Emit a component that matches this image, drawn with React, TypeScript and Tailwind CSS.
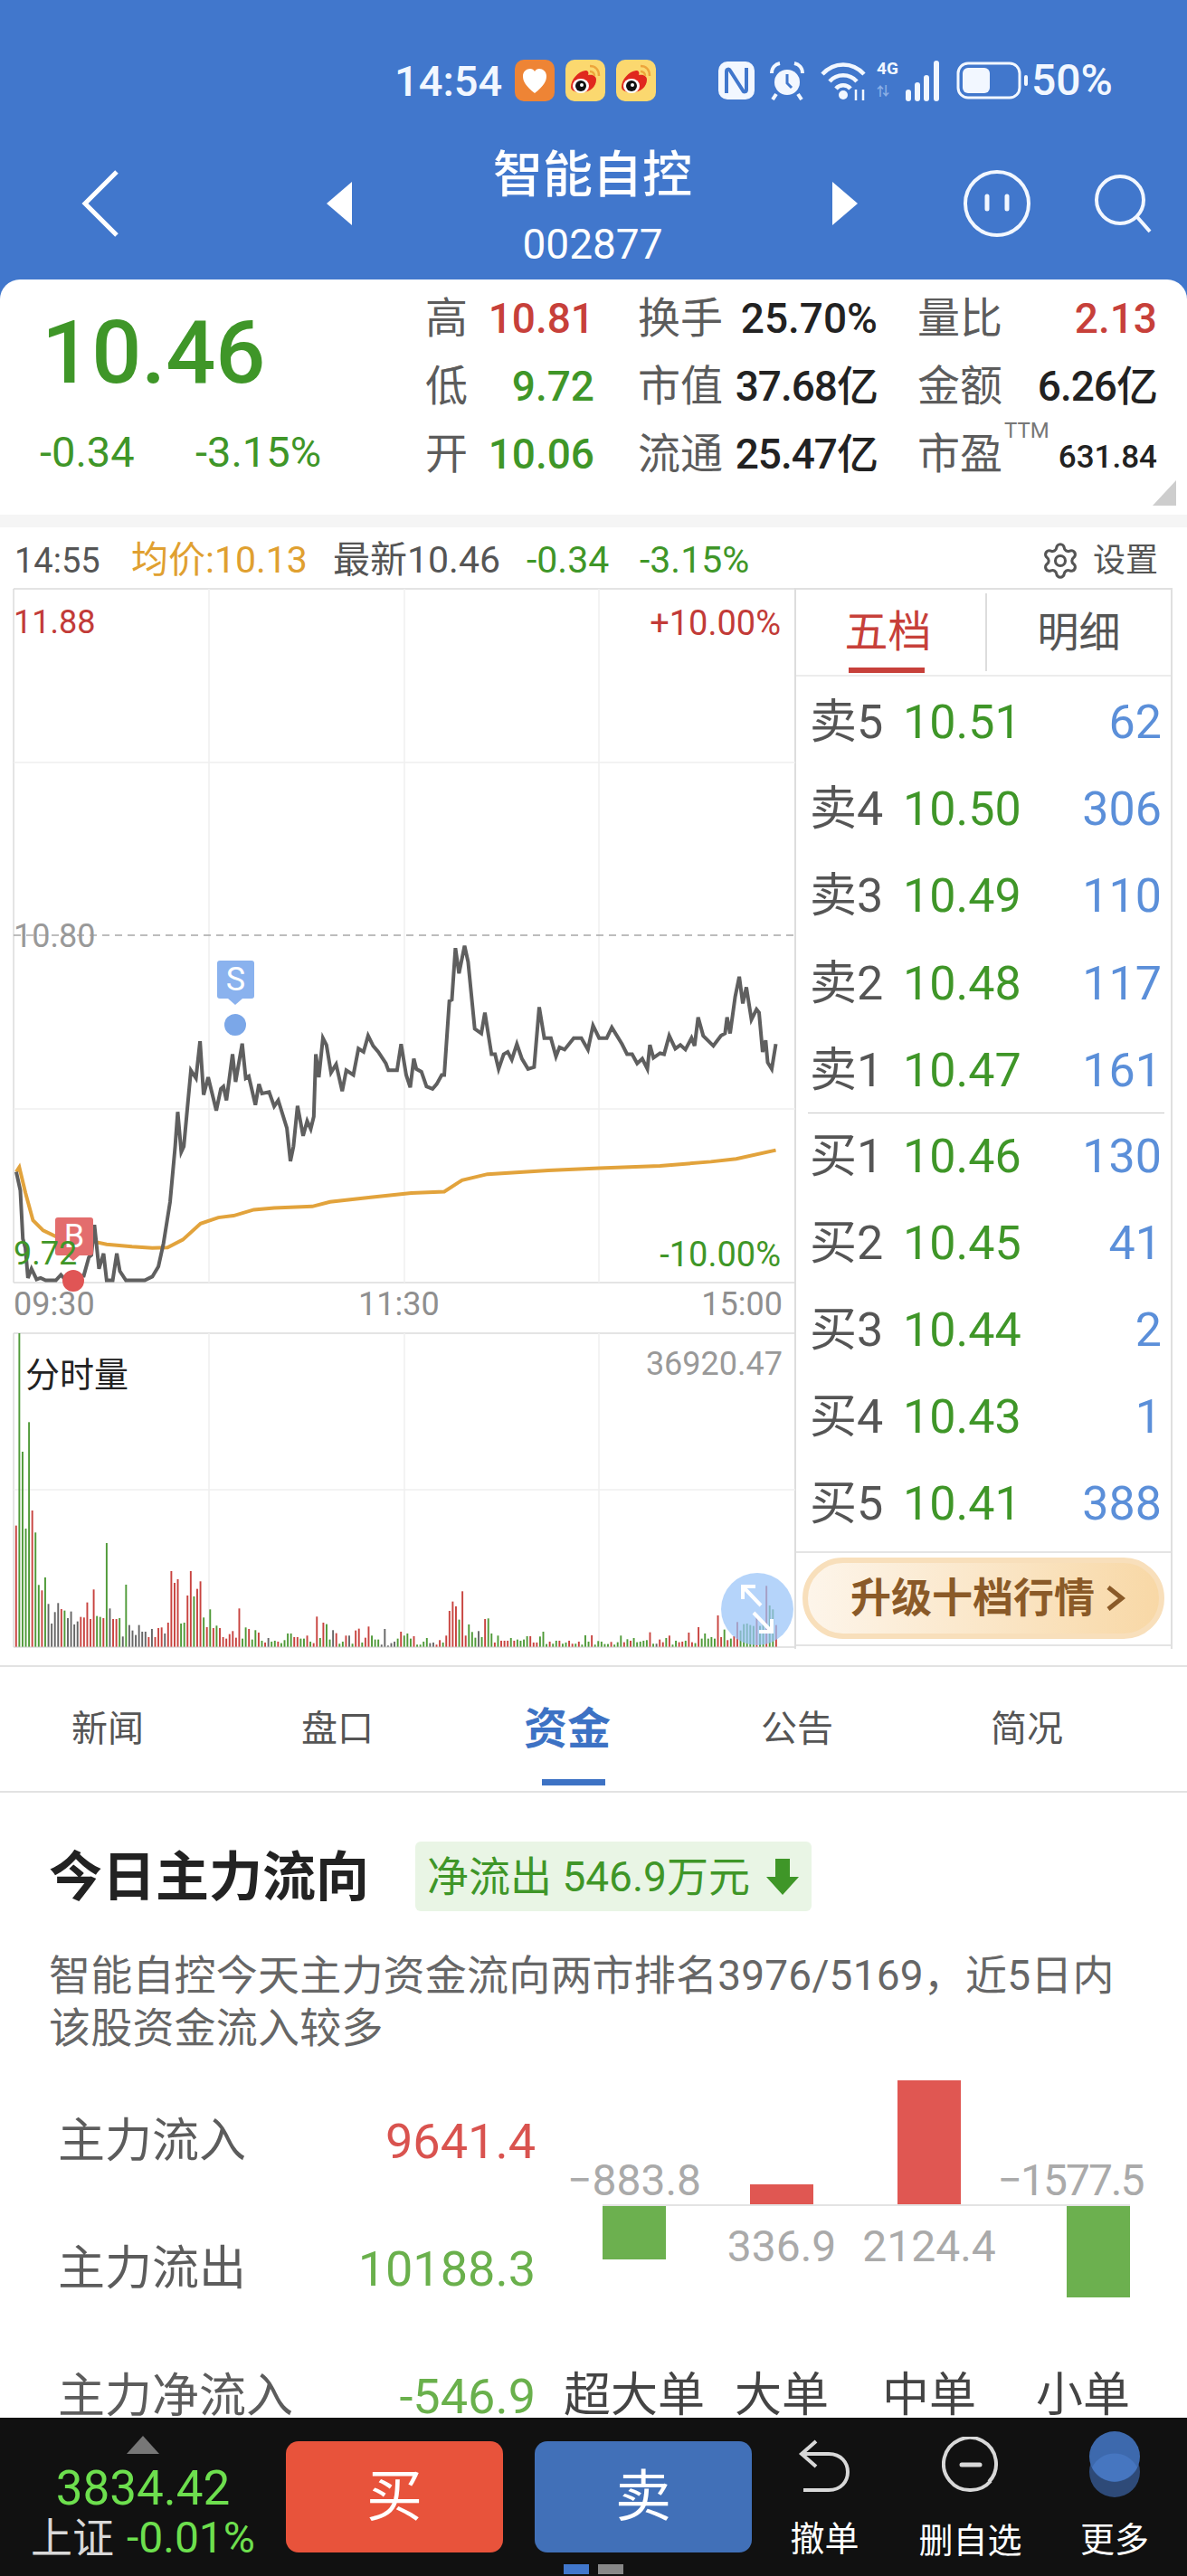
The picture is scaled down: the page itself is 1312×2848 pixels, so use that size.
import React from "react";
import { Settings } from "lucide-react";

const GRAY_LINE =
  "32,1285 40,1325 45,1430 50,1450 55,1515 62,1495 72,1518 80,1515 90,1520 110,1520 120,1508 128,1518 135,1520 150,1510 165,1510 175,1470 180,1465 186,1400 195,1495 204,1462 210,1520 222,1520 230,1462 236,1500 248,1520 285,1520 300,1512 312,1490 322,1440 335,1350 345,1230 350,1155 357,1242 362,1230 376,1065 386,1082 394,1002 401,1118 410,1080 426,1152 435,1105 440,1100 446,1130 458,1030 464,1090 477,1007 484,1082 490,1078 503,1140 510,1095 516,1115 530,1112 540,1143 548,1130 565,1190 572,1262 578,1230 586,1142 597,1207 605,1175 612,1192 618,1165 622,1030 628,1080 636,995 643,1010 652,1070 662,1052 674,1110 682,1065 696,1075 706,1018 716,1025 725,990 735,1012 745,1025 760,1050 765,1065 782,1065 790,1008 800,1075 808,1102 815,1040 820,1062 830,1068 840,1100 852,1105 860,1095 870,1075 875,1075 885,915 890,912 897,800 904,855 915,795 922,830 935,975 948,985 955,940 968,1030 975,1030 982,1062 992,1030 1000,1025 1008,1042 1018,1008 1028,1040 1040,1062 1052,1058 1062,928 1072,995 1085,995 1095,1035 1102,1015 1112,1020 1130,995 1145,995 1158,1020 1168,968 1180,995 1195,995 1205,972 1225,1008 1235,1030 1245,1030 1255,1050 1265,1040 1275,1062 1280,1010 1287,1038 1300,1028 1308,1030 1318,990 1330,1018 1340,1010 1350,1020 1362,995 1368,1012 1375,950 1385,990 1405,1012 1420,990 1428,985 1432,950 1438,985 1448,905 1456,862 1463,920 1470,885 1480,955 1490,933 1495,940 1502,1025 1508,1000 1512,1048 1520,1062 1528,1008";
const GOLD_LINE =
  "32,1285 38,1275 50,1330 65,1390 85,1412 110,1425 150,1432 180,1435 210,1442 260,1447 300,1450 330,1449 360,1432 395,1397 430,1384 460,1380 500,1367 540,1363 615,1360 650,1350 730,1340 810,1331 875,1328 910,1303 960,1290 1080,1282 1180,1277 1300,1272 1400,1263 1450,1257 1528,1238";
const VOL =
  "770r 132g 525g 780g 427g 720r 793g 967g 985r 942g 1030k 1095k 1057k 1027k 1047r 1052g 1077k 1055k 1098k 1088k 1073r 1075r 1025r 1080r 982r 1070g 1073g 1077r 828g 1045k 1080r 1080r 1077g 1138k 966g 1100k 1118k 1133k 1100k 1122k 1122k 1140r 1113k 1140r 1110r 1108r 1128k 1092r 921r 960r 948r 1095g 1092g 1002r 921r 1005g 980r 955r 1075g 1107r 1048g 1110r 1102g 1110r 1140r 1145r 1130r 1120r 1142r 1045r 1145g 1108g 1113r 1148g 1117g 1125r 1152g 1158r 1143k 1155g 1152g 1155r 1160g 1150g 1128g 1128g 1140r 1140r 1145g 1145g 1135r 1155g 1160r 1072r 1143g 1092r 1097g 1148g 1117k 1127r 1162g 1155g 1135r 1135k 1162g 1118r 1112r 1158g 1142r 1105r 1135g 1148g 1148g 1165k 1113k 1168k 1160k 1155k 1145g 1122r 1135g 1128g 1145g 1137r 1165g 1165g 1155g 1143g 1160k 1158k 1165r 1150r 1158g 1135r 1053r 1022r 1038r 1082g 988r 1135r 1098g 1123g 1142g 1120k 1140g 1080r 1078g 1128g 1158r 1135g 1152r 1152r 1152r 1143g 1152r 1148g 1152g 1148g 1137g 1137r 1158r 1158r 1138g 1122g 1163g 1155r 1162g 1152g 1152r 1162g 1158g 1152r 1162r 1162g 1155r 1165g 1134g 1155g 1134r 1165g 1153g 1155g 1163g 1163g 1156r 1165g 1157g 1135g 1157r 1147g 1152r 1143g 1157g 1155g 1152g 1150g 1124r 1162g 1162k 1148r 1157r 1143g 1135r 1165g 1152g 1157r 1155r 1152g 1125r 1157r 1160g 1107r 1145g 1128g 1145g 1140g 1145g 1068r 1140r 1115g 1150r 1145g 1137r 1090r 1118g 1097g 1095g 1100g 1103g 1072r 1103g 1090g 970r 1035g 1048g 1100r"
    .split(" ");
const VOL_COLOR: Record<string, string> = { r: "#c8433f", g: "#4f9a38", k: "#666666" };

const BOOK = [
  ["卖5", "10.51", "62"],
  ["卖4", "10.50", "306"],
  ["卖3", "10.49", "110"],
  ["卖2", "10.48", "117"],
  ["卖1", "10.47", "161"],
];
const BOOK2 = [
  ["买1", "10.46", "130"],
  ["买2", "10.45", "41"],
  ["买3", "10.44", "2"],
  ["买4", "10.43", "1"],
  ["买5", "10.41", "388"],
];

function BookRow({ r }: { r: string[] }) {
  return (
    <div className="flex h-[96.2px] items-center pl-[15px] pr-[10px] text-[52px] leading-none">
      <span className="w-[103px] text-[#555555]">{r[0]}</span>
      <span className="text-[#3f9628]">{r[1]}</span>
      <span className="ml-auto text-[#5b8fd9]">{r[2]}</span>
    </div>
  );
}

function Weibo() {
  return (
    <svg width="44" height="46" viewBox="0 0 44 46">
      <rect width="44" height="46" rx="10" fill="#fbd86f" />
      <path d="M6 30c0-8 8-17 16-18 3 0 4 2 3 5 5-1 9 1 9 5 0 8-7 14-16 14-8 0-12-2-12-6z" fill="#e0281e" />
      <ellipse cx="17" cy="29" rx="9" ry="8" fill="#fff" />
      <circle cx="17" cy="29" r="6" fill="#111" />
      <circle cx="18" cy="28" r="2" fill="#fff" />
      <path d="M27 7c6 0 10 4 10 11M27 13c3 0 5 2 5 5" stroke="#eda53c" strokeWidth="2.5" fill="none" />
    </svg>
  );
}

function StatusBar() {
  return (
    <div className="mt-[60px] flex h-[58px] items-center pl-[436px] text-[47px] font-medium leading-none text-[#f2f7ff]">
      <span className="w-[133px]">14:54</span>
      <svg width="44" height="46" viewBox="0 0 44 46">
        <rect width="44" height="46" rx="10" fill="#ee8435" />
        <path d="M22 37C12 29 9 24 9 18c0-5 4-8 8-8 2 0 4 1 5 3 1-2 3-3 5-3 4 0 8 3 8 8 0 6-3 11-13 19z" fill="#fff" />
      </svg>
      <span className="ml-[12px] flex items-center">
        <Weibo />
      </span>
      <span className="ml-[12px] flex items-center">
        <Weibo />
      </span>
      <svg className="ml-[68px]" width="42" height="44" viewBox="0 0 42 44" fill="none">
        <rect x="1" y="1" width="40" height="42" rx="10" fill="#f2f7ff" />
        <path d="M10 36V12c0-3 3-3 4-1l14 22c1 2 4 2 4-1V8" stroke="#4177cc" strokeWidth="4" />
      </svg>
      <svg className="ml-[15px]" width="40" height="44" viewBox="0 0 40 44" fill="none">
        <circle cx="20" cy="24" r="14" fill="#f2f7ff" />
        <path d="M20 15v10l5 5" stroke="#4177cc" strokeWidth="3" />
        <path d="M3 14c0-6 4-10 9-11M37 14c0-6-4-10-9-11M8 37l-4 6M32 37l4 6" stroke="#f2f7ff" strokeWidth="4" />
      </svg>
      <svg className="ml-[17px]" width="54" height="44" viewBox="0 0 54 44" fill="none">
        <path d="M2 15c13-14 33-14 46 0M10 23c8-9 22-9 30 0M17 31c4-5 12-5 16 0" stroke="#f2f7ff" strokeWidth="4.5" />
        <circle cx="25" cy="38" r="5" fill="#f2f7ff" />
        <path d="M39 32v12M47 32v12" stroke="#f2f7ff" strokeWidth="2.5" />
      </svg>
      <span className="ml-[8px] flex h-[46px] w-[34px] flex-col text-[19px] font-bold leading-[20px]">
        <span>4G</span>
        <span className="mt-[6px] text-[14px] leading-[16px] text-[#8db0e6]">⇅</span>
      </span>
      <svg className="-ml-[4px]" width="44" height="46" viewBox="0 0 44 46" fill="#f2f7ff">
        <rect x="2" y="33" width="6" height="13" rx="3" />
        <rect x="12" y="25" width="6" height="21" rx="3" />
        <rect x="22" y="17" width="6" height="29" rx="3" />
        <rect x="33" y="1" width="6" height="45" rx="3" />
      </svg>
      <svg className="ml-[14px]" width="80" height="42" viewBox="0 0 80 42" fill="none">
        <rect x="2" y="2" width="68" height="38" rx="11" stroke="#f2f7ff" strokeWidth="3" />
        <rect x="7" y="7" width="30" height="28" rx="6" fill="#f2f7ff" />
        <rect x="75" y="15" width="4" height="12" rx="2" fill="#f2f7ff" />
      </svg>
      <span className="ml-[3px] text-[48px]">50%</span>
    </div>
  );
}

function NavBar() {
  return (
    <div className="mt-[32px] flex h-[150px] items-center pl-[90px] text-white">
      <svg width="42" height="74" viewBox="0 0 42 74" fill="none">
        <path d="M39 2 4 37l35 35" stroke="#fff" strokeWidth="5" />
      </svg>
      <svg className="ml-[229px]" width="28" height="48" viewBox="0 0 28 48">
        <path d="M28 0v48L0 24z" fill="#fff" />
      </svg>
      <div className="ml-[156px] flex h-[150px] w-[220px] flex-col items-center">
        <div className="mt-[2px] h-[82px] text-[55px] font-medium leading-[82px]">智能自控</div>
        <div className="h-[72px] text-[46px] leading-[72px]">002877</div>
      </div>
      <svg className="ml-[155px]" width="28" height="48" viewBox="0 0 28 48">
        <path d="M0 0v48l28-24z" fill="#fff" />
      </svg>
      <svg className="ml-[116px]" width="76" height="76" viewBox="0 0 76 76" fill="none">
        <circle cx="38" cy="38" r="35" stroke="#f2f7ff" strokeWidth="4" />
        <path d="M27 30v14M49 30v14" stroke="#f2f7ff" strokeWidth="5" strokeLinecap="round" />
      </svg>
      <svg className="ml-[69px]" width="66" height="66" viewBox="0 0 66 66" fill="none">
        <circle cx="29" cy="29" r="26" stroke="#f2f7ff" strokeWidth="4" />
        <path d="m48 48 14 16" stroke="#f2f7ff" strokeWidth="4" />
      </svg>
    </div>
  );
}

function Stat({ k, v, c, kw = "w-[46px]", vw = "w-[141px]" }: { k: string; v: string; c: string; kw?: string; vw?: string }) {
  return (
    <>
      <span className={`${kw} whitespace-nowrap text-[47px] leading-none text-[#5c5c5c]`}>{k}</span>
      <span className={`${vw} text-right text-[46px] font-medium leading-none ${c}`}>{v}</span>
    </>
  );
}

function Quote() {
  return (
    <div className="flex h-[260px] rounded-t-[22px] bg-white">
      <div className="w-[470px] pl-[44px]">
        <div className="mt-[31px] h-[100px] pl-[2px] text-[97px] font-medium leading-[100px] text-[#3f9628]">10.46</div>
        <div className="mt-[29px] flex h-[60px] items-center text-[47px] leading-none text-[#3f9628]">
          <span className="w-[172px]">-0.34</span>
          <span>-3.15%</span>
        </div>
      </div>
      <div className="flex flex-col pt-[5px]">
        <div className="flex h-[75px] items-center">
          <Stat k="高" v="10.81" c="text-[#c7403a]" />
          <span className="w-[48px]" />
          <Stat k="换手" v="25.70%" c="text-[#222222]" kw="w-[96px]" vw="w-[169px]" />
          <span className="w-[44px]" />
          <Stat k="量比" v="2.13" c="text-[#c7403a]" kw="w-[96px]" vw="w-[169px]" />
        </div>
        <div className="flex h-[75px] items-center">
          <Stat k="低" v="9.72" c="text-[#3f9628]" />
          <span className="w-[48px]" />
          <Stat k="市值" v="37.68亿" c="text-[#222222] tracking-[-1px]" kw="w-[96px]" vw="w-[169px]" />
          <span className="w-[44px]" />
          <Stat k="金额" v="6.26亿" c="text-[#222222] tracking-[-1px]" kw="w-[96px]" vw="w-[169px]" />
        </div>
        <div className="flex h-[75px] items-center">
          <Stat k="开" v="10.06" c="text-[#3f9628]" />
          <span className="w-[48px]" />
          <Stat k="流通" v="25.47亿" c="text-[#222222] tracking-[-1px]" kw="w-[96px]" vw="w-[169px]" />
          <span className="w-[44px]" />
          <span className="w-[96px] text-[47px] leading-none text-[#5c5c5c]">市盈</span>
          <span className="flex w-[169px] items-start">
            <span className="-mt-[16px] text-[24px] leading-none text-[#777777]">TTM</span>
            <span className="ml-auto mt-[8px] text-[35px] font-medium leading-none text-[#222222]">631.84</span>
          </span>
        </div>
        <div className="flex justify-end">
          <svg className="-mr-[21px] mt-[-8px]" width="26" height="28" viewBox="0 0 26 28">
            <path d="M26 0v28H0z" fill="#cdcdcd" />
          </svg>
        </div>
      </div>
    </div>
  );
}

function ChartHeader() {
  return (
    <div className="flex h-[67px] items-center pl-[16px] pr-[32px] pt-[6px] text-[41px] leading-none">
      <span className="w-[129px] text-[38px] text-[#555555]">14:55</span>
      <span className="w-[223px] text-[#e0a030]">均价:10.13</span>
      <span className="w-[214px] text-[#555555]">最新10.46</span>
      <span className="w-[125px] text-[#3f9628]">-0.34</span>
      <span className="text-[#3f9628]">-3.15%</span>
      <Settings className="ml-auto text-[#555555]" size={44} strokeWidth={1.7} />
      <span className="ml-[14px] text-[36px] text-[#555555]">设置</span>
    </div>
  );
}

function ChartCanvas() {
  return (
    <div className="relative h-[1191px] w-[880px] text-[36px] leading-none">
      <svg className="absolute inset-0" width="880" height="1191" viewBox="0 650 880 1191" fill="none">
        <path d="M15 651H879M15 1418H879M15 1474H879M15 1821H879M15 651V1418M15 1474V1821M879 651V1821" stroke="#dcdcdc" strokeWidth="1.5" />
        <path d="M15 843H879M15 1226H879M231 651V1418M447 651V1418M662 651V1418M15 1647H879M231 1474V1821M447 1474V1821M662 1474V1821" stroke="#f0f0f0" strokeWidth="1.5" />
        <path d="M15 1034H879" stroke="#a8a8a8" strokeWidth="1.5" strokeDasharray="8 6" />
        <g transform="translate(0,640) scale(0.5612,0.5102)">
          <polyline points={GOLD_LINE} stroke="#e2a33c" strokeWidth="4" vectorEffect="non-scaling-stroke" />
          <polyline points={GRAY_LINE} stroke="#5f5f5f" strokeWidth="4" vectorEffect="non-scaling-stroke" />
        </g>
        <g transform="translate(0,1430) scale(0.5612,0.3333)">
          {VOL.map((v, i) => {
            const top = parseInt(v, 10);
            return <rect key={i} x={30 + i * 6.37} y={top} width="3.4" height={1172 - top} fill={VOL_COLOR[v.slice(-1)]} />;
          })}
        </g>
        <circle cx="260" cy="1133" r="12" fill="#7ba7e8" />
        <path d="M252 1104h16l-8 7z" fill="#8ab2ee" />
        <circle cx="81" cy="1416" r="12" fill="#e05555" />
        <path d="M73 1387h16l-8 7z" fill="#e36d6d" />
        <circle cx="837" cy="1779" r="40" fill="#98c4f8" fillOpacity="0.72" />
        <path d="M841 1775l-20-21M821 1768v-14h14M833 1783l20 21M853 1790v14h-14" stroke="#fff" strokeWidth="4" />
      </svg>
      <div className="absolute left-[240px] top-[412px] flex h-[42px] w-[41px] items-center justify-center rounded-[3px] bg-[#8ab2ee] text-[36px] text-white">S</div>
      <div className="absolute left-[61px] top-[696px] flex h-[42px] w-[42px] items-center justify-center rounded-[3px] bg-[#e36d6d] text-[36px] text-white">B</div>
      <span className="absolute left-[15px] top-[20px] text-[#c23b38]">11.88</span>
      <span className="absolute right-[17px] top-[20px] text-[38px] text-[#c23b38]">+10.00%</span>
      <span className="absolute left-[15px] top-[367px] text-[#999999]">10.80</span>
      <span className="absolute left-[15px] top-[718px] text-[#3f9628]">9.72</span>
      <span className="absolute right-[17px] top-[718px] text-[38px] text-[#3f9628]">-10.00%</span>
      <span className="absolute left-[15px] top-[774px] text-[#8f8f8f]">09:30</span>
      <span className="absolute left-[396px] top-[774px] text-[#8f8f8f]">11:30</span>
      <span className="absolute right-[15px] top-[774px] text-[#8f8f8f]">15:00</span>
      <span className="absolute left-[28px] top-[851px] text-[38px] text-[#222222]">分时量</span>
      <span className="absolute right-[15px] top-[840px] text-[#999999]">36920.47</span>
    </div>
  );
}

function OrderBook() {
  return (
    <div className="h-[1173px] w-[418px] border-x-2 border-t-2 border-[#e0e0e0]">
      <div className="flex h-[96px] border-b-2 border-[#ececec]">
        <div className="relative flex w-[209px] items-center justify-center pr-[6px] text-[48px] text-[#c7403a]">
          五档
          <span className="absolute bottom-[2px] left-[58px] h-[6px] w-[84px] bg-[#c7403a]" />
        </div>
        <div className="my-[4px] w-[2px] bg-[#dddddd]" />
        <div className="flex flex-1 items-center justify-center text-[46px] text-[#555555]">明细</div>
      </div>
      <div className="pt-[3px]">
        {BOOK.map((r) => (
          <BookRow key={r[0]} r={r} />
        ))}
      </div>
      <div className="-mt-[2px] ml-[13px] mr-[7px] h-[1.5px] bg-[#c8c8c8]" />
      <div className="-mt-[1px]">
        {BOOK2.map((r) => (
          <BookRow key={r[0]} r={r} />
        ))}
      </div>
      <div className="mt-[4px] h-[105px] border-y-2 border-[#e4e4e4] px-[7px] pt-[5px]">
        <div className="flex h-[90px] items-center justify-center gap-[12px] rounded-full border-[6px] border-[#f8dfbb] bg-gradient-to-r from-[#fdf5ea] to-[#f8d8a6] pl-[10px] text-[45px] font-bold leading-none text-[#8a5a28]">
          <span>升级十档行情</span>
          <svg width="22" height="30" viewBox="0 0 22 30" fill="none">
            <path d="M3 3l15 12L3 27" stroke="#8a5a28" strokeWidth="5" />
          </svg>
        </div>
      </div>
    </div>
  );
}

function Tabs() {
  const items = ["新闻", "盘口", "资金", "公告", "简况"];
  return (
    <div className="flex h-[141px] gap-[174px] border-y-2 border-[#e2e2e2] pl-[79px]">
      {items.map((t) =>
        t === "资金" ? (
          <div key={t} className="relative flex w-[80px] items-center justify-center whitespace-nowrap text-[48px] font-bold text-[#3d72c4]">
            {t}
            <span className="absolute bottom-[6px] left-[12px] h-[7px] w-[70px] bg-[#3d72c4]" />
          </div>
        ) : (
          <div key={t} className="flex w-[80px] items-center justify-center whitespace-nowrap text-[40px] text-[#555555]">
            {t}
          </div>
        )
      )}
    </div>
  );
}

function Flow() {
  return (
    <div className="pl-[54px]">
      <div className="mt-[54px] flex h-[77px] items-center">
        <span className="mt-[2px] w-[356px] whitespace-nowrap text-[59px] font-bold leading-none text-[#222222]">今日主力流向</span>
        <span className="ml-[49px] flex h-[77px] w-[438px] items-center rounded-[6px] bg-[#e9f5e5] pl-[13px] text-[46px] leading-none text-[#3f9628]">
          净流出 546.9万元
          <svg className="ml-[18px]" width="36" height="40" viewBox="0 0 36 40">
            <path d="M10 0h16v20h10L18 40 0 20h10z" fill="#3f9628" />
          </svg>
        </span>
      </div>
      <div className="mt-[42px] whitespace-nowrap text-[46px] leading-[58px] tracking-[0.2px] text-[#666666]">
        智能自控今天主力资金流向两市排名3976/5169，近5日内
        <br />
        该股资金流入较多
      </div>
      <div className="mt-[26px] flex">
        <div className="w-[538px] pl-[10px] text-[52px] leading-none">
          <div className="flex h-[141px] items-center justify-between">
            <span className="text-[#5c5c5c]">主力流入</span>
            <span className="text-[54px] text-[#d9534f]">9641.4</span>
          </div>
          <div className="flex h-[141px] items-center justify-between">
            <span className="text-[#5c5c5c]">主力流出</span>
            <span className="text-[54px] text-[#6ab04c]">10188.3</span>
          </div>
          <div className="flex h-[141px] items-center justify-between">
            <span className="text-[#5c5c5c]">主力净流入</span>
            <span className="text-[54px] text-[#6ab04c]">-546.9</span>
          </div>
        </div>
        <div className="ml-[74px] w-[583px] text-[48px] leading-none text-[#aaaaaa]">
          <div className="flex h-[140px] items-end justify-between">
            <div className="flex h-[52px] w-[70px] items-center justify-center whitespace-nowrap">−883.8</div>
            <div className="ml-[93px] h-[22px] w-[70px] bg-[#e05752]" />
            <div className="ml-[93px] h-[137px] w-[70px] bg-[#e05752]" />
            <div className="ml-[117px] flex h-[52px] w-[70px] -translate-x-[31px] items-center justify-center whitespace-nowrap tracking-[-2px]">−1577.5</div>
          </div>
          <div className="h-[2px] bg-[#e3e3e3]" />
          <div className="flex h-[141px] items-start">
            <div className="h-[59px] w-[70px] bg-[#6cb04f]" />
            <div className="ml-[93px] mt-[19px] flex h-[52px] w-[70px] items-center justify-center whitespace-nowrap">336.9</div>
            <div className="ml-[93px] mt-[19px] flex h-[52px] w-[70px] items-center justify-center whitespace-nowrap">2124.4</div>
            <div className="ml-[117px] h-[101px] w-[70px] bg-[#6cb04f]" />
          </div>
          <div className="flex h-[138px] items-center text-[52px] text-[#444444]">
            <span className="flex w-[70px] justify-center whitespace-nowrap">超大单</span>
            <span className="ml-[93px] flex w-[70px] justify-center whitespace-nowrap">大单</span>
            <span className="ml-[93px] flex w-[70px] justify-center whitespace-nowrap">中单</span>
            <span className="ml-[100px] flex w-[70px] justify-center whitespace-nowrap">小单</span>
          </div>
        </div>
      </div>
    </div>
  );
}

function BottomBar() {
  return (
    <div className="flex h-[175px] shrink-0 bg-[#111111] text-white">
      <div className="flex w-[316px] flex-col items-center">
        <svg className="mt-[20px]" width="36" height="20" viewBox="0 0 36 20">
          <path d="M18 0 36 20H0z" fill="#777777" />
        </svg>
        <div className="mt-[8px] h-[60px] text-[53px] leading-[60px] text-[#6ddf4e]">3834.42</div>
        <div className="-mt-[3px] flex h-[56px] items-center leading-none">
          <span className="text-[46px] text-[#d8d8d8]">上证</span>
          <span className="ml-[14px] text-[48px] text-[#6ddf4e]">-0.01%</span>
        </div>
      </div>
      <div className="mt-[26px] flex h-[123px] w-[240px] items-center justify-center rounded-[14px] bg-[#e8533b] text-[62px]">买</div>
      <div className="ml-[35px] mt-[26px] flex h-[123px] w-[240px] items-center justify-center rounded-[14px] bg-[#4170b8] text-[62px]">卖</div>
      <div className="relative ml-[42px] flex w-[77px] flex-col items-center">
        <svg className="mt-[24px]" width="60" height="58" viewBox="0 0 60 58" fill="none">
          <path d="M20 2 4 16l16 14M4 16h30c28 0 28 40 0 40H6" stroke="#d8d8d8" strokeWidth="4" />
        </svg>
        <span className="mt-[33px] whitespace-nowrap text-[38px] leading-none">撤单</span>
      </div>
      <div className="ml-[65px] flex w-[115px] flex-col items-center">
        <svg className="mt-[21px]" width="64" height="62" viewBox="0 0 64 62" fill="none">
          <path d="M52 50A29 29 0 1 0 32 59c8 0 16-3 22-10" stroke="#d8d8d8" strokeWidth="4" />
          <path d="M22 31h20" stroke="#d8d8d8" strokeWidth="5" strokeLinecap="round" />
        </svg>
        <span className="mt-[34px] whitespace-nowrap text-[38px] leading-none">删自选</span>
      </div>
      <div className="ml-[64px] flex w-[76px] flex-col items-center">
        <svg className="mt-[15px]" width="56" height="73" viewBox="0 0 56 73">
          <circle cx="28" cy="45" r="28" fill="#2e4a78" />
          <circle cx="28" cy="28" r="28" fill="#3d69ad" />
          <path d="M3 40a28 28 0 0 1 50 0 28 28 0 0 1-50 0z" fill="#4676c0" />
        </svg>
        <span className="mt-[28px] whitespace-nowrap text-[38px] leading-none">更多</span>
      </div>
    </div>
  );
}

export default function App() {
  return (
    <div className="relative flex h-[2848px] w-[1312px] flex-col overflow-hidden bg-white [font-family:Roboto,'Noto_Sans_CJK_SC',sans-serif]">
      <div className="flex-1 overflow-hidden">
        <div className="h-[309px] bg-[#4177cc] pt-[0.1px]">
          <StatusBar />
          <NavBar />
        </div>
        <div className="bg-[#4177cc]">
          <Quote />
        </div>
        <div className="h-[14px] bg-[#f5f5f5]" />
        <ChartHeader />
        <div className="flex">
          <ChartCanvas />
          <div className="-ml-[2px]">
            <OrderBook />
          </div>
        </div>
        <Tabs />
        <Flow />
      </div>
      <BottomBar />
      <div className="absolute bottom-[2px] left-[623px] flex gap-[10px]">
        <span className="h-[11px] w-[28px] bg-[#4177cc]" />
        <span className="h-[11px] w-[28px] bg-[#888888]" />
      </div>
    </div>
  );
}
